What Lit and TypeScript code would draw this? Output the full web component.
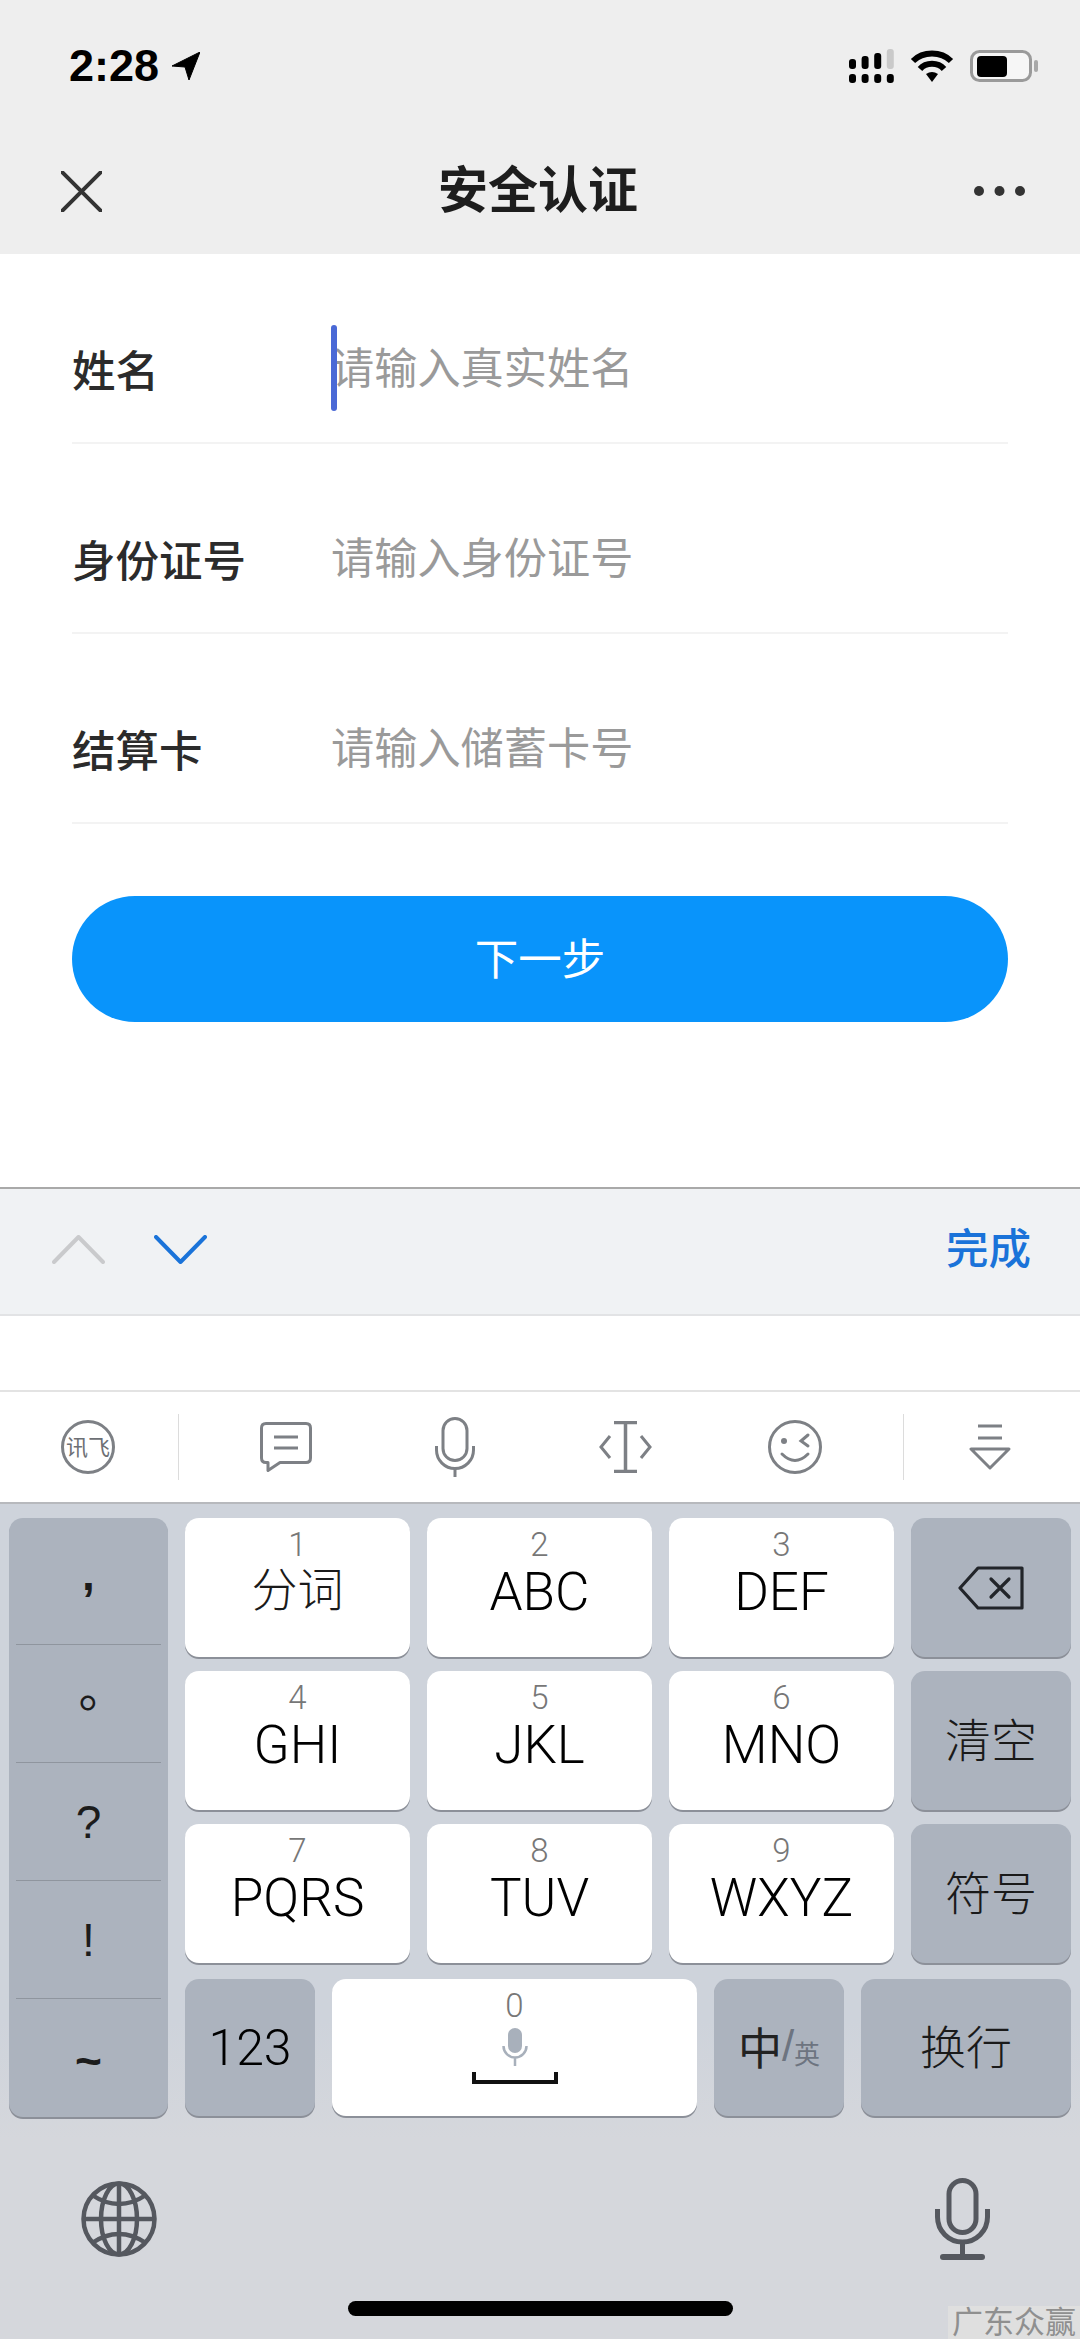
import { LitElement, html, css, svg } from "lit";
import { customElement } from "lit/decorators.js";

const rows = [
  { label: "姓名", ph: "请输入真实姓名", caret: true },
  { label: "身份证号", ph: "请输入身份证号", caret: false },
  { label: "结算卡", ph: "请输入储蓄卡号", caret: false },
];
const keys = [
  ["1", "分词"], ["2", "ABC"], ["3", "DEF"],
  ["4", "GHI"], ["5", "JKL"], ["6", "MNO"],
  ["7", "PQRS"], ["8", "TUV"], ["9", "WXYZ"],
];
const symbols = [
  { t: ",", c: "comma" }, { t: "。", c: "ring" }, { t: "?", c: "" }, { t: "!", c: "" }, { t: "~", c: "tilde" },
];

@customElement("app-root")
export class AppRoot extends LitElement {
  static styles = css`
    :host { display: block; width: 1080px; height: 2339px; font-family: "Liberation Sans", "Noto Sans CJK SC", sans-serif; }
    * { box-sizing: border-box; }
    svg { display: block; flex: none; }
    .page { position: relative; width: 1080px; height: 2339px; overflow: hidden; background: #fff; display: flex; flex-direction: column; }

    .header { height: 254px; background: #eeeeee; flex: none; }
    .status { height: 132px; display: flex; align-items: center; padding: 0 42px 0 69px; }
    .time { font-size: 45px; font-weight: 700; color: #000; line-height: 44px; width: 103px; }
    .status-right { margin-left: auto; display: flex; align-items: center; gap: 16px; }
    .nav { height: 118px; display: flex; align-items: center; justify-content: space-between; padding: 0 55px 0 61px; position: relative; }
    .title { font-size: 50px; font-weight: 700; color: #1d1d1d; line-height: 60px; }

    .form { padding: 0 72px; flex: none; }
    .row { height: 190px; padding-top: 48px; border-bottom: 2px solid #f3f3f3; display: flex; align-items: center; }
    .label { width: 258px; font-size: 43.500px; font-weight: 500; color: #2b2b2b; line-height: 56px; }
    .input { position: relative; font-size: 43.200px; color: #9a9a9a; line-height: 56px; padding: 0 0 6px 1px; }
    .caret { position: absolute; left: 1px; top: -16px; width: 6px; height: 86px; border-radius: 3px; background: #4a69d6; }
    .button { margin: 72px 72px 0; height: 126px; border-radius: 63px; background: #0994fb; color: #fff; font-size: 43.500px; display: flex; align-items: center; justify-content: center; flex: none; padding-bottom: 6px; }

    .toolbar { margin-top: 165px; height: 129px; flex: none; background: #f0f2f4; border-top: 2px solid #a9a9a9; border-bottom: 2px solid #e2e3e5; display: flex; align-items: center; padding: 0 49px 4px 52px; gap: 49px; }
    .done { margin-left: auto; font-size: 42.500px; font-weight: 500; color: #1a73d9; line-height: 50px; }
    .blank { height: 74px; flex: none; background: #fff; }
    .ime { height: 114px; flex: none; background: #fff; border-top: 2px solid #e3e3e3; border-bottom: 2px solid #b7b9bd; display: grid; grid-template-columns: 176px 4px 212px 126px 214px 126px 90px 84px 48px; align-items: center; justify-items: center; }
    .sep { width: 1px; height: 66px; background: #dcdcdc; }

    .keyboard { flex: 1; background: linear-gradient(#ced3db 0, #ced3db 62%, #d5d7dc 76%, #d5d7dc 100%); padding: 14px 9px 0; display: flex; flex-direction: column; }
    .grid { display: grid; grid-template-columns: 159px 225px 225px 225px 160px; grid-template-rows: repeat(4, 139px); column-gap: 17px; row-gap: 14px; }
    .key { background: #fff; border-radius: 14px; box-shadow: 0 2px 0 #8c9099; display: flex; flex-direction: column; align-items: center; color: #000; }
    .gray { background: #acb3be; }
    .center { justify-content: center; }
    .digit { font-family: Roboto, sans-serif; font-size: 33px; line-height: 32px; color: #777; margin-top: 11px; font-weight: 300; }
    .main { font-family: Roboto, sans-serif; font-weight: 300; font-size: 53px; line-height: 56px; margin-top: 3px; }
    .cjk { font-family: "Noto Sans CJK SC", sans-serif; font-size: 46px; font-weight: 300; line-height: 56px; color: #1a1a1a; }
    .gray.cjk { padding-bottom: 8px; }
    .main.cjk { margin-top: 2px; line-height: 46px; }
    .side { grid-row: 1 / span 4; height: 599px; display: grid; align-items: stretch; grid-template-rows: 126px repeat(4, 118px); padding: 0 7px; }
    .sym { display: flex; align-items: center; justify-content: center; font-size: 46px; color: #1c1c1c; line-height: 46px; }
    .sym + .sym { border-top: 1px solid #8f959e; }
    .comma { padding-bottom: 14px; font-weight: 700; }
    .ring { font-size: 48px; padding: 0 0 0 28px; transform: translateY(-13px); }
    .tilde { padding-top: 6px; font-weight: 700; }
    .bottom-row { grid-column: 2 / -1; display: flex; gap: 17px; height: 137px; margin-top: 2px; }
    .k123 { width: 130px; }
    .space { width: 365px; }
    .zh { width: 130px; flex-direction: row; justify-content: center; align-items: center; padding-bottom: 4px; }
    .enter { flex: 1; }
    .n123 { font-family: Roboto, sans-serif; font-size: 50px; font-weight: 300; line-height: 60px; }
    .zero { font-family: Roboto, sans-serif; font-weight: 300; font-size: 33px; line-height: 32px; color: #777; margin-top: 11px; }
    .space svg { margin-top: 6px; }
    .zh-main { font-size: 44px; font-weight: 400; color: #222; }
    .zh-slash { font-size: 44px; font-weight: 300; color: #6d7480; }
    .zh-sub { font-size: 26px; color: #6d7480; margin-top: 14px; }

    .kb-bottom { display: flex; align-items: center; justify-content: space-between; padding: 0 81px 0 72px; margin-top: 62px; height: 82px; flex: none; }
    .home { width: 385px; height: 15px; border-radius: 8px; background: #000; margin: 41px auto 0; flex: none; }
    .mark { position: absolute; right: 0; bottom: 0; width: 132px; height: 33px; background: #dfdfdf; color: #8f8f8f; font-size: 31px; line-height: 33px; text-align: center; white-space: nowrap; }
  `;

  private arrow() {
    return html`<svg width="28" height="28" viewBox="0 0 28 28"><path d="M28 0 L0 14 L13 15 L17 28 Z" fill="#000" stroke="#000" stroke-linejoin="round"/></svg>`;
  }
  private signal() {
    const tops = [10, 7, 4, 0];
    return html`<svg width="45" height="34" viewBox="0 0 45 34">
      ${tops.map((t, i) => svg`<rect x=${i * 12.6} y=${t} width="7" height=${20 - t} rx="3" fill=${i === 3 ? "#c9c9c9" : "#000"}/>`)}
      ${tops.map((_, i) => svg`<rect x=${i * 12.6} y="25" width="7" height="9" rx="3" fill="#000"/>`)}
    </svg>`;
  }
  private wifi() {
    return html`<svg width="44" height="32" viewBox="0 0 44 32" fill="none" stroke="#000" stroke-width="6">
      <path d="M3 11 C13 1 31 1 41 11"/><path d="M10 19 C16 12 28 12 34 19"/>
      <path d="M16 24 Q22 20 28 24 L22 32 Z" fill="#000" stroke="none"/>
    </svg>`;
  }
  private battery() {
    return html`<svg width="68" height="32" viewBox="0 0 68 32">
      <rect x="1.5" y="1.5" width="59" height="29" rx="8" fill="#f6f6f6" stroke="#9a9a9a" stroke-width="3"/>
      <rect x="7" y="6" width="30" height="21" rx="4" fill="#000"/>
      <rect x="64" y="10" width="4" height="12" rx="2" fill="#a8a8a8"/>
    </svg>`;
  }
  private close() {
    return html`<svg width="41" height="41" viewBox="0 0 41 41" stroke="#333" stroke-width="4" stroke-linecap="round"><path d="M1 1 L40 40 M40 1 L1 40"/></svg>`;
  }
  private dots() {
    return html`<svg width="51" height="10" viewBox="0 0 51 10" fill="#333"><circle cx="5" cy="5" r="5"/><circle cx="25.5" cy="5" r="5"/><circle cx="46" cy="5" r="5"/></svg>`;
  }
  private chevron(up: boolean) {
    const d = up ? "M2 27 L26.5 2 L51 27" : "M2 2 L26.5 27 L51 2";
    const c = up ? "#c9cacc" : "#1a73d9";
    return html`<svg width="53" height="29" viewBox="0 0 53 29" fill="none" stroke=${c} stroke-width="4" stroke-linecap="round" stroke-linejoin="round"><path d=${d}/></svg>`;
  }
  private iconFly() {
    return html`<svg width="54" height="54" viewBox="0 0 54 54"><circle cx="27" cy="27" r="25.5" fill="none" stroke="#7d8085" stroke-width="3"/><text x="27" y="35" text-anchor="middle" font-size="22" font-family="Noto Sans CJK SC" fill="#6d7075">讯飞</text></svg>`;
  }
  private iconBubble() {
    return html`<svg width="52" height="50" viewBox="0 0 52 50" fill="none" stroke="#7d8085" stroke-width="3" stroke-linejoin="round"><path d="M6 1.5 H46 Q50.5 1.5 50.5 6 V36 Q50.5 40.5 46 40.5 H20 L8 48.5 V40.5 H6 Q1.5 40.5 1.5 36 V6 Q1.5 1.5 6 1.5 Z"/><path d="M14 15 H38 M14 26 H38"/></svg>`;
  }
  private iconMic() {
    return html`<svg width="40" height="60" viewBox="0 0 40 60" fill="none" stroke="#7d8085" stroke-width="3"><rect x="8" y="1.5" width="24" height="42" rx="12"/><path d="M1.5 29 V33 A18.5 18.5 0 0 0 38.5 33 V29"/><path d="M20 51 V60"/></svg>`;
  }
  private iconCursor() {
    return html`<svg width="53" height="52" viewBox="0 0 53 52" fill="none" stroke="#7d8085" stroke-width="3"><path d="M15 1.5 H38 M15 50.5 H38 M26.5 1.5 V50.5" stroke-width="3.5"/><path d="M11 15 L2 26 L11 37 M42 15 L51 26 L42 37"/></svg>`;
  }
  private iconSmile() {
    return html`<svg width="54" height="54" viewBox="0 0 54 54" fill="none" stroke="#7d8085" stroke-width="3" stroke-linecap="round"><circle cx="27" cy="27" r="25.5"/><circle cx="16" cy="21" r="3" fill="#7d8085" stroke="none"/><path d="M40 15 L33 21 L40 26"/><path d="M14 34 Q27 47 40 34"/></svg>`;
  }
  private iconHide() {
    return html`<svg width="42" height="46" viewBox="0 0 42 46" fill="none" stroke="#7d8085" stroke-width="3"><path d="M9 2 H33 M9 14 H33"/><path d="M2 25 H40 L21 44 Z" stroke-linejoin="round"/></svg>`;
  }
  private backspace() {
    return html`<svg width="66" height="44" viewBox="0 0 66 44" fill="none" stroke="#22252a" stroke-width="3.2" stroke-linejoin="round" stroke-linecap="round"><path d="M20 2 H64 V42 H20 L2 22 Z"/><path d="M33 13 L51 31 M51 13 L33 31"/></svg>`;
  }
  private smallMic() {
    return html`<svg width="26" height="38" viewBox="0 0 26 38"><rect x="6" y="0" width="14" height="25" rx="7" fill="#a8b0bb"/><path d="M1.5 18 A11.5 11.5 0 0 0 24.5 18 M13 30 V38" fill="none" stroke="#a8b0bb" stroke-width="2.5"/></svg>`;
  }
  private spaceBar() {
    return html`<svg width="86" height="12" viewBox="0 0 86 12" fill="none" stroke="#111" stroke-width="4"><path d="M2 0 V10 H84 V0"/></svg>`;
  }
  private globe() {
    return html`<svg width="76" height="76" viewBox="0 0 76 76" fill="none" stroke="#55585f" stroke-width="4.5"><circle cx="38" cy="38" r="35.5"/><ellipse cx="38" cy="38" rx="18" ry="35.5"/><path d="M38 2 V74 M2 38 H74"/><path d="M11 14 Q38 32 65 14 M11 62 Q38 44 65 62"/></svg>`;
  }
  private bigMic() {
    return html`<svg width="55" height="82" viewBox="0 0 55 82" fill="none" stroke="#55585f" stroke-width="5"><rect x="14" y="2.5" width="27" height="52" rx="13.5"/><path d="M2.5 31 V39 A25 25 0 0 0 52.500 39 V31"/><path d="M27.500 64 V78"/><path d="M8 79 H47" stroke-width="6" stroke-linecap="round"/></svg>`;
  }

  render() {
    return html`<div class="page">
      <div class="header">
        <div class="status">
          <div class="time">2:28</div>${this.arrow()}
          <div class="status-right">${this.signal()}${this.wifi()}${this.battery()}</div>
        </div>
        <div class="nav">${this.close()}<div class="title">安全认证</div>${this.dots()}</div>
      </div>
      <div class="form">
        ${rows.map((r) => html`<div class="row">
          <div class="label">${r.label}</div>
          <div class="input">${r.caret ? html`<div class="caret"></div>` : ""}${r.ph}</div>
        </div>`)}
      </div>
      <div class="button">下一步</div>
      <div class="toolbar">${this.chevron(true)}${this.chevron(false)}<div class="done">完成</div></div>
      <div class="blank"></div>
      <div class="ime">
        ${this.iconFly()}<div class="sep"></div>${this.iconBubble()}${this.iconMic()}${this.iconCursor()}${this.iconSmile()}<div class="sep"></div>${this.iconHide()}
      </div>
      <div class="keyboard">
        <div class="grid">
          <div class="key gray side">${symbols.map((s) => html`<div class="sym"><span class=${s.c}>${s.t}</span></div>`)}</div>
          ${keys.slice(0, 3).map((k) => this.numKey(k))}
          <div class="key gray center">${this.backspace()}</div>
          ${keys.slice(3, 6).map((k) => this.numKey(k))}
          <div class="key gray center cjk">清空</div>
          ${keys.slice(6, 9).map((k) => this.numKey(k))}
          <div class="key gray center cjk">符号</div>
          <div class="bottom-row">
            <div class="key gray center k123 n123">123</div>
            <div class="key space"><div class="zero">0</div>${this.smallMic()}${this.spaceBar()}</div>
            <div class="key gray zh"><span class="zh-main">中</span><span class="zh-slash">/</span><span class="zh-sub">英</span></div>
            <div class="key gray center enter cjk">换行</div>
          </div>
        </div>
        <div class="kb-bottom">${this.globe()}${this.bigMic()}</div>
        <div class="home"></div>
      </div>
      <div class="mark">广东众赢</div>
    </div>`;
  }

  private numKey(k: string[]) {
    const isCjk = k[1] === "分词";
    return html`<div class="key"><div class="digit">${k[0]}</div><div class=${isCjk ? "main cjk" : "main"}>${k[1]}</div></div>`;
  }
}
